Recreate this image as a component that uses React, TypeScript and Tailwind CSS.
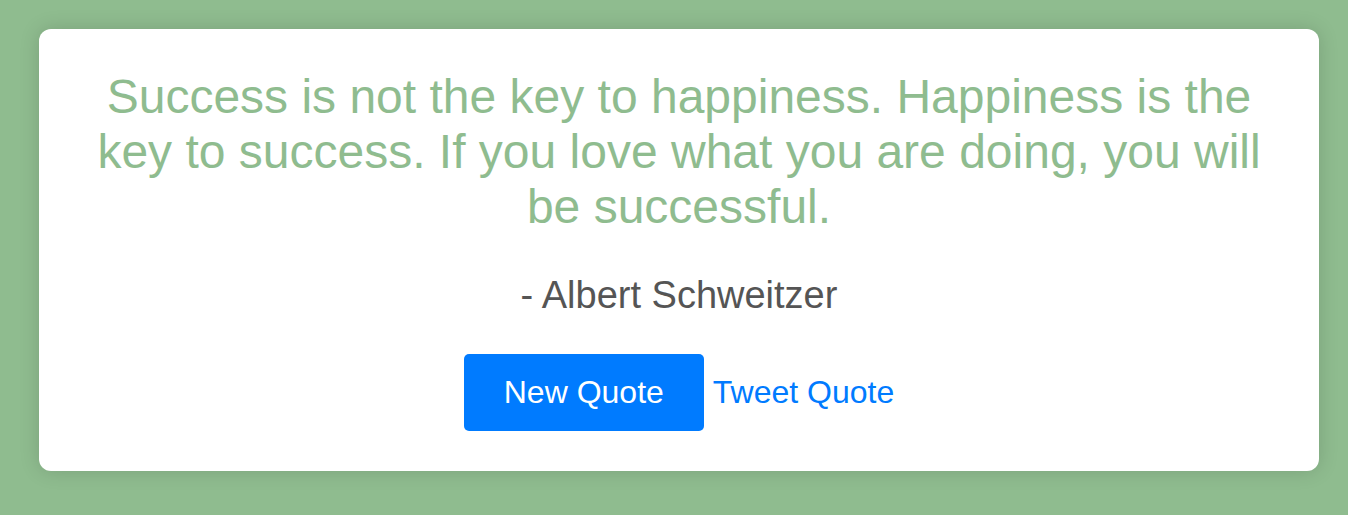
import React from 'react';

const App: React.FC = () => {
  return (
    <div className="min-h-[515px] bg-[#8fbc8f] pt-[29px] pl-[39px] font-['Liberation_Sans',Arial,sans-serif]">
      <div className="w-[1280px] rounded-[12px] bg-white p-10 text-center shadow-[0_0_20px_rgba(0,0,0,0.15)]">
        <p className="mx-auto w-[1200px] text-[48px] leading-[1.15] text-[#8fbc8f]">
          Success is not the key to happiness. Happiness is the key to success. If you love what you are doing, you will be successful.
        </p>
        <p className="mt-[39px] text-[38px] leading-[1.15] text-[#555]">- Albert Schweitzer</p>
        <div className="mt-[37px] flex items-center justify-center gap-[9px]">
          <button className="rounded-[5px] bg-[#007bff] px-10 py-5 text-[32px] leading-[1.15] text-white">
            New Quote
          </button>
          <a href="#" className="text-[32px] leading-[1.15] text-[#007bff]">
            Tweet Quote
          </a>
        </div>
      </div>
    </div>
  );
};

export default App;
